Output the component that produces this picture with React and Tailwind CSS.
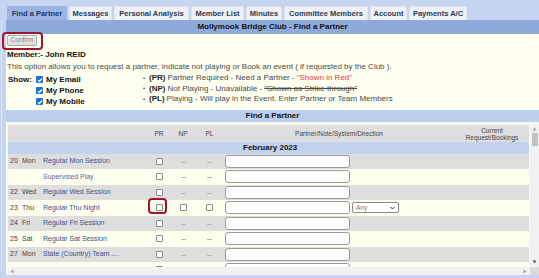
import React from 'react'

const tabs = [
  { t: 'Find a Partner', w: 'w-[60px]' },
  { t: 'Messages', w: 'w-[43px]' },
  { t: 'Personal Analysis', w: 'w-[75px]' },
  { t: 'Member List', w: 'w-[53px]' },
  { t: 'Minutes', w: 'w-[36px]' },
  { t: 'Committee Members', w: 'w-[84px]' },
  { t: 'Account', w: 'w-[37px]' },
  { t: 'Payments A/C', w: 'w-[58px]' },
]

const rows = [
  { d: '20', day: 'Mon', name: 'Regular Mon Session', grey: true },
  { d: '', day: '', name: 'Supervised Play', grey: false, soft: true },
  { d: '22', day: 'Wed', name: 'Regular Wed Session', grey: true },
  { d: '23', day: 'Thu', name: 'Regular Thu Night', grey: false, full: true },
  { d: '24', day: 'Fri', name: 'Regular Fri Session', grey: true },
  { d: '25', day: 'Sat', name: 'Regular Sat Session', grey: false },
  { d: '27', day: 'Mon', name: 'State (Country) Team ....', grey: true },
  { d: '', day: '', name: 'Supervised Play', grey: false, soft: true },
]

function Box() {
  return <span className="block w-[7px] h-[7px] border border-[#8a8a8a] rounded-[1px] bg-white" />
}

function Checked() {
  return (
    <span className="flex items-center justify-center w-[7px] h-[7px] rounded-[1px] bg-[#1c6fe3]">
      <svg width="6" height="6" viewBox="0 0 6 6">
        <path d="M1 3.1 L2.4 4.5 L5 1.5" stroke="white" strokeWidth="1.2" fill="none" />
      </svg>
    </span>
  )
}

function Dash() {
  return <span className="block w-[5px] h-[1px] bg-[#b5b5b5] translate-y-[1px]" />
}

export default function App() {
  return (
    <div className="w-[539px] h-[278px] overflow-hidden bg-[#c5d5ef] flex font-['Liberation_Sans',Arial,sans-serif]">
      {/* left strip */}
      <div className="w-[6px] shrink-0 pt-[20px] pl-[1px]">
        <div className="w-[1px] h-[250px] bg-[#dbe5f6]" />
      </div>

      <div className="w-[533px] flex flex-col">
        {/* Tabs */}
        <div className="h-[20px] pt-[6px] pl-[1px] flex items-end gap-[2px]">
          {tabs.map((t, i) => (
            <div key={t.t}
              className={`${t.w} h-[14px] flex items-center justify-center rounded-t-[2px] border border-b-0 text-[7.5px] font-bold whitespace-nowrap ${
                i === 0
                  ? 'bg-[#9cb4e1] border-[#9cb4e1] text-[#1e3566]'
                  : 'bg-[#eef1f8] border-[#dde4f2] text-[#2f3a4f]'
              }`}>
              {t.t}
            </div>
          ))}
        </div>

        {/* Page header */}
        <div className="h-[14px] bg-[#8eaadb] flex items-center justify-center text-[8px] font-bold text-[#111]">
          Mollymook Bridge Club - Find a Partner
        </div>

        {/* Intro panel */}
        <div className="h-[76px] bg-[#fffff0] pl-[1px] pt-[1px]">
          <div className="relative flex w-[30px] h-[11px]">
            <button className="w-[30px] h-[11px] border border-[#a9a9a9] rounded-[2px] bg-gradient-to-b from-[#f4f4f4] to-[#dcdcdc] text-[6.5px] leading-none text-[#7a7a7a]">
              Confirm
            </button>
            <div className="absolute left-[-5px] top-[-3px] w-[41px] h-[18px] border-[2.5px] border-[#a3122e] rounded-[4px]" />
          </div>
          <div className="mt-[4px] text-[8px] font-bold text-[#111] leading-[10px]">Member:- John REID</div>
          <div className="mt-[2px] text-[8px] text-[#4a4a4a] leading-[10px] whitespace-nowrap">
            This option allows you to request a partner, indicate not playing or Book an event ( if requested by the Club ).
          </div>
          <div className="flex mt-[2px]">
            <div className="w-[136px] flex pl-[1px]">
              <span className="text-[8px] font-bold text-[#111] leading-[11px] mr-[4px]">Show:</span>
              <div className="flex flex-col">
                {['My Email', 'My Phone', 'My Mobile'].map(s => (
                  <div key={s} className="flex items-center h-[11px] gap-[3px]">
                    <Checked />
                    <span className="text-[8px] font-bold text-[#111]">{s}</span>
                  </div>
                ))}
              </div>
            </div>
            <div className="flex flex-col text-[8px] text-[#4a4a4a] -mt-[1px]">
              <div className="flex items-center h-[10.5px] whitespace-nowrap">
                <span className="w-[6px] text-[6px] text-[#333]">•</span>
                <b className="text-[#222] mr-[2px]">(PR)</b>Partner Required - Need a Partner - <span className="text-[#e8373c] ml-[2px]">"Shown in Red"</span>
              </div>
              <div className="flex items-center h-[10.5px] whitespace-nowrap">
                <span className="w-[6px] text-[6px] text-[#333]">•</span>
                <b className="text-[#222] mr-[2px]">(NP)</b>Not Playing - Unavailable - <span className="line-through ml-[2px]">"Shown as Strike through"</span>
              </div>
              <div className="flex items-center h-[10.5px] whitespace-nowrap">
                <span className="w-[6px] text-[6px] text-[#333]">•</span>
                <b className="text-[#222] mr-[2px]">(PL)</b>Playing - Will play in the Event. Enter Partner or Team Members
              </div>
            </div>
          </div>
        </div>

        {/* Section bar */}
        <div className="h-[12px] bg-[#bccfee] flex items-center justify-center text-[8px] font-bold text-[#111]">
          Find a Partner
        </div>

        {/* Table region */}
        <div className="bg-[#f9f9f3] pt-[3px] pl-[2px] flex flex-col">
          <div className="flex h-[142px]">
            <div className="w-[521px] h-[142px] overflow-hidden flex flex-col">
              {/* header */}
              <div className="h-[17px] shrink-0 bg-[#dedede] flex items-center text-[6.5px] text-[#444]">
                <div className="w-[140px]" />
                <div className="w-[22px] text-center">PR</div>
                <div className="w-[26px] text-center">NP</div>
                <div className="w-[27px] text-center">PL</div>
                <div className="w-[232px] text-center">Partner/Note/System/Direction</div>
                <div className="w-[74px] text-center leading-[7px]">Current<br />Request/Bookings</div>
              </div>
              <div className="h-[11.5px] shrink-0 bg-[#c1d2ef] flex items-center pl-[235px] text-[8px] font-bold text-[#111]">
                February 2023
              </div>
              {rows.map((r, i) => (
                <div key={i} className={`h-[15.5px] shrink-0 flex items-center text-[7px] ${r.grey ? 'bg-[#dedede]' : 'bg-[#fefeee]'}`}>
                  <div className="w-[32px] flex pl-[2px] text-[#444]">
                    <span className="w-[12px]">{r.d}</span>
                    <span>{r.day}</span>
                  </div>
                  <div className={`w-[108px] pl-[3px] whitespace-nowrap ${r.soft ? 'text-[#5a66a6]' : 'text-[#3c4f90]'}`}>{r.name}</div>
                  <div className="w-[22px] h-full flex items-center justify-center relative">
                    <Box />
                    {r.full && (
                      <div className="absolute left-0 top-[-2px] w-[19px] h-[16px] border-[2.5px] border-[#a3122e] rounded-[4px]" />
                    )}
                  </div>
                  <div className="w-[26px] flex justify-center">{r.full ? <Box /> : <Dash />}</div>
                  <div className="w-[27px] flex justify-center">{r.full ? <Box /> : <Dash />}</div>
                  <div className="w-[232px] flex items-center pl-[2px] gap-[2px]">
                    <div className="w-[125px] h-[13px] bg-white border border-[#9a9a9a] rounded-[3px]" />
                    {r.full && (
                      <div className="w-[47px] h-[11px] bg-white border border-[#8a8a8a] rounded-[2px] flex items-center justify-between px-[3px] text-[6.5px] text-[#777]">
                        <span>Any</span>
                        <svg width="5" height="4" viewBox="0 0 5 4"><path d="M0.5 1 L2.5 3 L4.5 1" stroke="#333" strokeWidth="1" fill="none" /></svg>
                      </div>
                    )}
                  </div>
                  <div className="w-[74px]" />
                </div>
              ))}
            </div>
            {/* vertical scrollbar */}
            <div className="ml-[1px] w-[9px] bg-[#f1f1f1] flex flex-col items-center">
              <svg width="5" height="4" viewBox="0 0 5 4" className="mt-[2px]"><path d="M0.5 3.5 L2.5 0.5 L4.5 3.5Z" fill="#a3a3a3" /></svg>
              <div className="mt-[2px] w-[6px] h-[13px] bg-[#c1c1c1]" />
              <div className="flex-1" />
              <svg width="5" height="4" viewBox="0 0 5 4" className="mb-[3px]"><path d="M0.5 0.5 L2.5 3.5 L4.5 0.5Z" fill="#505050" /></svg>
            </div>
          </div>
          {/* horizontal scrollbar */}
          <div className="flex h-[8px]">
            <div className="w-[522px] bg-[#f1f1f1] flex items-center justify-between px-[2px]">
              <svg width="4" height="5" viewBox="0 0 4 5"><path d="M3.5 0.5 L0.5 2.5 L3.5 4.5Z" fill="#a3a3a3" /></svg>
              <svg width="4" height="5" viewBox="0 0 4 5" className="mr-[1px]"><path d="M0.5 0.5 L3.5 2.5 L0.5 4.5Z" fill="#a3a3a3" /></svg>
            </div>
            <div className="w-[9px] bg-[#dcdcdc]" />
          </div>
        </div>
      </div>
    </div>
  )
}
